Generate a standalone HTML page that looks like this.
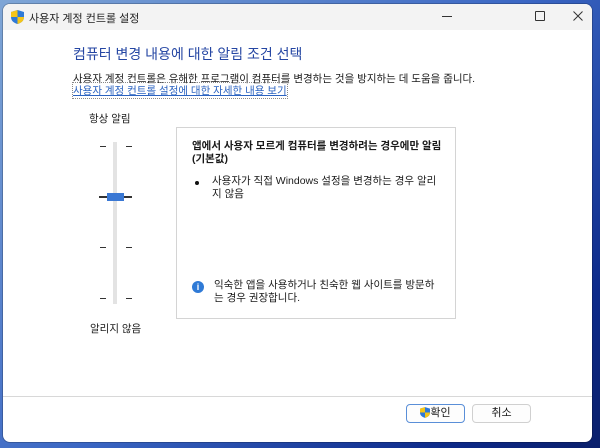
<!DOCTYPE html>
<html><head><meta charset="utf-8"><style>
body{margin:0;width:600px;height:448px;overflow:hidden;background:linear-gradient(135deg,#7fa6d6 0%,#3b67c4 50%,#0d2a8a 85%,#0a1f6b 100%);font-family:"Liberation Sans","Noto Sans CJK KR",sans-serif;position:relative;color:#1a1a1a}
.win{position:absolute;left:3px;top:4px;width:589px;height:438px;background:#fff;border-radius:7px;overflow:hidden;box-shadow:0 0 0 1px rgba(0,0,0,.2)}
.tb{height:26px;background:#f3f3f3;position:relative;font-size:11px}
.abs{position:absolute}
.tick{position:absolute;width:6px;height:1px;background:#333}
.btn{position:absolute;top:400px;height:17px;border:1px solid #d0d0d0;border-radius:4px;background:#fdfdfd;font-size:11px;text-align:center;line-height:17px}
</style></head><body>
<div class="win">
<div class="tb">
<svg class="abs" style="left:8px;top:6px" width="13" height="14" viewBox="0 0 13 14"><path d="M6.5 0 L13 2 V7 C13 11 10 13 6.5 14 C3 13 0 11 0 7 V2Z" fill="#2f7ad6"/><path d="M6.5 0 V7 H0 V2Z" fill="#f5c518"/><path d="M6.5 7 H13 C13 11 10 13 6.5 14Z" fill="#f5c518"/></svg>
<div class="abs" style="left:26px;top:6px;color:#222">사용자 계정 컨트롤 설정</div>
<div class="abs" style="left:439px;top:12px;width:10px;height:1px;background:#333"></div>
<div class="abs" style="left:532px;top:7px;width:8px;height:8px;border:1px solid #333;border-radius:1px"></div>
<svg class="abs" style="left:570px;top:7px" width="10" height="10" viewBox="0 0 10 10"><path d="M0.5 0.5 L9.5 9.5 M9.5 0.5 L0.5 9.5" stroke="#333" stroke-width="1"/></svg>
</div>
<div class="abs" style="left:70px;top:40px;font-size:14px;color:#2546a3">컴퓨터 변경 내용에 대한 알림 조건 선택</div>
<div class="abs" style="left:70px;top:67px;font-size:10.5px">사용자 계정 컨트롤은 유해한 프로그램이 컴퓨터를 변경하는 것을 방지하는 데 도움을 줍니다.</div>
<div class="abs" style="left:70px;top:79px;font-size:10.5px;color:#2a62c0;text-decoration:underline;outline:1px dotted #888">사용자 계정 컨트롤 설정에 대한 자세한 내용 보기</div>
<div class="abs" style="left:86px;top:107px;font-size:10.5px">항상 알림</div>
<div class="abs" style="left:110px;top:138px;width:4px;height:162px;background:#e3e3e3"></div>
<div class="tick" style="left:97px;top:142px"></div><div class="tick" style="left:123px;top:142px"></div>
<div class="tick" style="left:96px;top:192px;height:2px;width:8px"></div><div class="tick" style="left:121px;top:192px;height:2px;width:8px"></div>
<div class="tick" style="left:97px;top:243px"></div><div class="tick" style="left:123px;top:243px"></div>
<div class="tick" style="left:97px;top:294px"></div><div class="tick" style="left:123px;top:294px"></div>
<div class="abs" style="left:104px;top:189px;width:17px;height:8px;background:#3a78d4"></div>
<div class="abs" style="left:87px;top:317px;font-size:10.5px">알리지 않음</div>
<div class="abs" style="left:173px;top:123px;width:278px;height:190px;border:1px solid #d4d4d4">
<div class="abs" style="left:15px;top:12px;font-size:10.5px;font-weight:bold;line-height:13px;width:260px">앱에서 사용자 모르게 컴퓨터를 변경하려는 경우에만 알림 (기본값)</div>
<div class="abs" style="left:18px;top:53px;width:4px;height:4px;border-radius:50%;background:#111"></div>
<div class="abs" style="left:35px;top:47px;font-size:10.5px;line-height:13px;width:225px">사용자가 직접 Windows 설정을 변경하는 경우 알리지 않음</div>
<div class="abs" style="left:15px;top:153px;width:12px;height:12px;border-radius:50%;background:#2f7ad6;color:#fff;font-size:9px;font-weight:bold;text-align:center;line-height:12px">i</div>
<div class="abs" style="left:37px;top:151px;font-size:10.5px;line-height:13px;width:225px">익숙한 앱을 사용하거나 친숙한 웹 사이트를 방문하는 경우 권장합니다.</div>
</div>
<div class="abs" style="left:0;top:392px;width:589px;height:1px;background:#d8d8d8"></div>
<div class="btn" style="left:403px;width:57px;border-color:#5a8fd8">
<svg style="vertical-align:-2px" width="10" height="11" viewBox="0 0 13 14"><path d="M6.5 0 L13 2 V7 C13 11 10 13 6.5 14 C3 13 0 11 0 7 V2Z" fill="#2f7ad6"/><path d="M6.5 0 V7 H0 V2Z" fill="#f5c518"/><path d="M6.5 7 H13 C13 11 10 13 6.5 14Z" fill="#f5c518"/></svg>확인</div>
<div class="btn" style="left:469px;width:57px">취소</div>
</div>
</body></html>
